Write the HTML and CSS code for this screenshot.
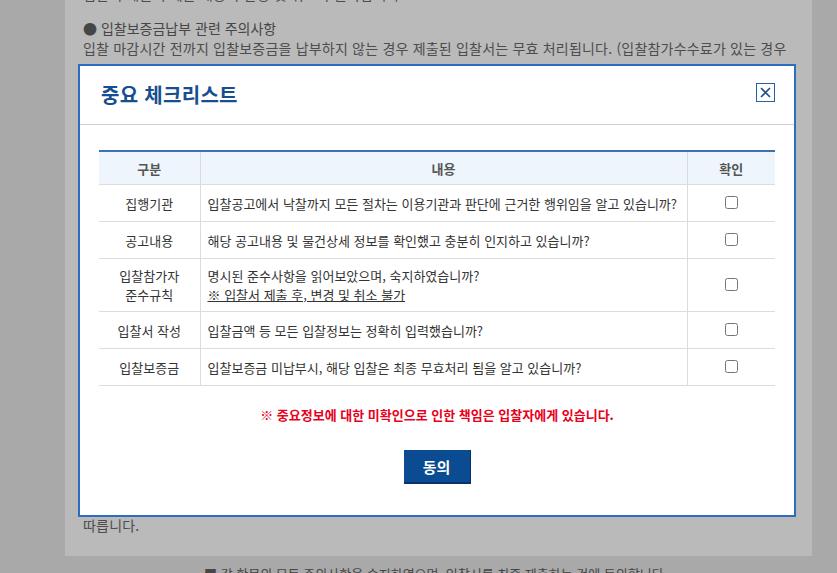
FILE: index.html
```html
<!DOCTYPE html>
<html lang="ko">
<head>
    <meta charset="UTF-8">
    <meta name="viewport" content="width=device-width, initial-scale=1.0">
    <title>입찰서 제출 - 중요 체크리스트</title>
    <link rel="stylesheet" href="styles.css">
</head>
<body>
    <div class="page">
        <div class="notice-box">
            <p class="notice-cut">입찰서 제출 후에는 내용의 변경 및 취소가 불가합니다.</p>
            <h4 class="notice-title">● 입찰보증금납부 관련 주의사항</h4>
            <p class="notice-text">입찰 마감시간 전까지 입찰보증금을 납부하지 않는 경우 제출된 입찰서는 무효 처리됩니다. (입찰참가수수료가 있는 경우</p>
            <div class="notice-hidden"></div>
            <p class="notice-text">따릅니다.</p>
        </div>
        <p class="agree-line">■ 각 항목의 모든 주의사항을 숙지하였으며, 입찰서를 최종 제출하는 것에 동의합니다.</p>
    </div>

    <div class="dim"></div>

    <div class="modal">
        <div class="modal-header">
            <h2 class="modal-title">중요 체크리스트</h2>
            <button class="modal-close" type="button" aria-label="닫기">
                <svg width="11" height="11" viewBox="0 0 11 11">
                    <path d="M1 1 L10 10 M10 1 L1 10" stroke="#1d4f8c" stroke-width="1.6" fill="none"/>
                </svg>
            </button>
        </div>
        <div class="modal-body">
            <table class="check-table">
                <colgroup>
                    <col class="col-type">
                    <col class="col-desc">
                    <col class="col-check">
                </colgroup>
                <thead>
                    <tr>
                        <th>구분</th>
                        <th>내용</th>
                        <th>확인</th>
                    </tr>
                </thead>
                <tbody>
                    <tr>
                        <td class="type">집행기관</td>
                        <td class="desc">입찰공고에서 낙찰까지 모든 절차는 이용기관과 판단에 근거한 행위임을 알고 있습니까?</td>
                        <td class="check"><input type="checkbox"></td>
                    </tr>
                    <tr>
                        <td class="type">공고내용</td>
                        <td class="desc">해당 공고내용 및 물건상세 정보를 확인했고 충분히 인지하고 있습니까?</td>
                        <td class="check"><input type="checkbox"></td>
                    </tr>
                    <tr class="tall">
                        <td class="type">입찰참가자<br>준수규칙</td>
                        <td class="desc">명시된 준수사항을 읽어보았으며, 숙지하였습니까?<br><u>※ 입찰서 제출 후, 변경 및 취소 불가</u></td>
                        <td class="check"><input type="checkbox"></td>
                    </tr>
                    <tr>
                        <td class="type">입찰서 작성</td>
                        <td class="desc">입찰금액 등 모든 입찰정보는 정확히 입력했습니까?</td>
                        <td class="check"><input type="checkbox"></td>
                    </tr>
                    <tr>
                        <td class="type">입찰보증금</td>
                        <td class="desc">입찰보증금 미납부시, 해당 입찰은 최종 무효처리 됨을 알고 있습니까?</td>
                        <td class="check"><input type="checkbox"></td>
                    </tr>
                </tbody>
            </table>
            <p class="warning">※ 중요정보에 대한 미확인으로 인한 책임은 입찰자에게 있습니다.</p>
            <div class="actions">
                <button class="btn-agree" type="button">동의</button>
            </div>
        </div>
    </div>
</body>
</html>
```

FILE: styles.css
```css
body {
    margin: 0;
    background-color: #e8e8e8;
    font-family: "Noto Sans CJK KR", "Noto Sans", sans-serif;
    color: #333;
    overflow: hidden;
}
.page {
    height: 573px;
    padding-top: 1px;
    box-sizing: border-box;
}
.notice-box {
    margin: -17px 0 0 65px;
    width: 747px;
    height: 572px;
    box-sizing: border-box;
    padding: 0 18px;
    background-color: #fff;
    color: #6a6a6a;
    font-size: 14px;
    letter-spacing: 0.2px;
}
.notice-cut {
    margin: 0;
    line-height: 20px;
}
.notice-title {
    margin: 14px 0 0;
    font-size: 14px;
    font-weight: normal;
    line-height: 20px;
    color: #606060;
    letter-spacing: 0;
}
.notice-text {
    margin: 0;
    line-height: 20px;
}
.notice-hidden {
    height: 457px;
}
.agree-line {
    margin: 8px 0 0 204px;
    font-size: 13px;
    line-height: 20px;
    color: #606060;
}
.dim {
    position: fixed;
    inset: 0;
    background-color: rgba(0, 0, 0, 0.27);
}
.modal {
    position: fixed;
    left: 78px;
    top: 64px;
    width: 718px;
    box-sizing: border-box;
    border: 2px solid #2a6ebd;
    background-color: #fff;
}
.modal-header {
    display: flex;
    justify-content: space-between;
    align-items: center;
    height: 58px;
    padding: 0 19px 0 21px;
    border-bottom: 1px solid #cfcfcf;
}
.modal-title {
    margin: 0;
    font-size: 20px;
    font-weight: bold;
    line-height: 26px;
    color: #174e8f;
    letter-spacing: 0.3px;
}
.modal-close {
    align-self: flex-start;
    margin-top: 17px;
    width: 19px;
    height: 19px;
    padding: 0;
    border: 1px solid #2262ac;
    background: #fff;
    display: flex;
    align-items: center;
    justify-content: center;
    cursor: pointer;
}
.modal-body {
    padding: 25px 19px 31px;
}
.check-table {
    width: 676px;
    border-collapse: collapse;
    table-layout: fixed;
    font-size: 13px;
    border-top: 2px solid #3c72b4;
}
.col-type {
    width: 101px;
}
.col-desc {
    width: 487px;
}
.col-check {
    width: 88px;
}
.check-table th {
    height: 32px;
    padding: 0;
    background-color: #eef5fc;
    color: #555;
    font-weight: bold;
    border-bottom: 1px solid #dcdcdc;
    border-left: 1px solid #dcdcdc;
}
.check-table td {
    height: 36px;
    padding: 0 7px;
    line-height: 19px;
    border-bottom: 1px solid #dcdcdc;
    border-left: 1px solid #dcdcdc;
}
.check-table th:first-child,
.check-table td:first-child {
    border-left: none;
}
.check-table tr.tall td {
    height: 52px;
}
.check-table td.type {
    text-align: center;
}
.check-table td.check {
    text-align: center;
    padding: 0;
}
.check-table td.check input {
    margin: 3px 0 0 0;
    width: 13px;
    height: 13px;
}
.warning {
    margin: 19px 0 0;
    text-align: center;
    font-size: 13px;
    font-weight: bold;
    line-height: 20px;
    color: #e8001c;
}
.actions {
    display: flex;
    justify-content: center;
    margin-top: 25px;
}
.btn-agree {
    width: 67px;
    height: 34px;
    padding: 0;
    border: none;
    border-right: 1px solid #06346a;
    border-bottom: 2px solid #06346a;
    background-color: #0a4b92;
    color: #fff;
    font-family: "Noto Sans CJK KR", sans-serif;
    font-size: 15px;
    font-weight: bold;
    cursor: pointer;
}
```
